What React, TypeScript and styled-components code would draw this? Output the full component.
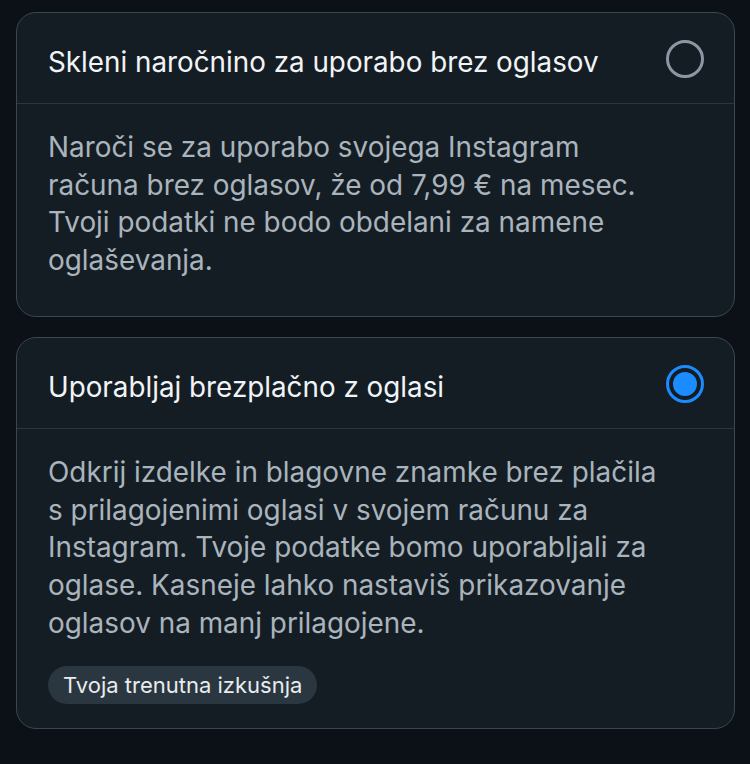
import * as React from 'react';
import styled, { createGlobalStyle } from 'styled-components';

const Global = createGlobalStyle`
  html, body {
    margin: 0;
    padding: 0;
    background: #0b1117;
  }
  body {
    font-family: Inter, "Noto Sans", sans-serif;
    -webkit-font-smoothing: antialiased;
  }
`;

const Page = styled.div`
  width: 750px;
  height: 764px;
  box-sizing: border-box;
  padding: 12px 15px 0 16px;
  display: flex;
  flex-direction: column;
  gap: 20px;
  background: #0b1117;
`;

const Card = styled.div`
  border: 1.5px solid #3b4750;
  border-radius: 20px;
  background: #151d24;
  overflow: hidden;
`;

const Header = styled.div`
  height: 90px;
  display: flex;
  align-items: center;
  justify-content: space-between;
  padding: 0 30px 0 31px;
  border-bottom: 1px solid #2b363e;
`;

const Title = styled.div`
  font-size: 27.8px;
  font-weight: 400;
  color: #f1f4f6;
  padding-top: 8px;
`;

const Radio = styled.div<{ $checked?: boolean }>`
  width: 38px;
  height: 38px;
  margin-top: 2px;
  box-sizing: border-box;
  border-radius: 50%;
  border: 3px solid ${(p) => (p.$checked ? '#1a8cff' : '#8b98a3')};
  display: flex;
  align-items: center;
  justify-content: center;

  &::after {
    content: '';
    display: ${(p) => (p.$checked ? 'block' : 'none')};
    width: 24px;
    height: 24px;
    border-radius: 50%;
    background: #1a8cff;
  }
`;

const Body = styled.div<{ $bottom: number }>`
  padding: 25px 30px ${(p) => p.$bottom}px 31px;
  display: flex;
  flex-direction: column;
  align-items: flex-start;
  gap: 24px;
`;

const Text = styled.p`
  margin: 0;
  font-size: 27.9px;
  line-height: 37.7px;
  color: #a9b4bd;
`;

const Badge = styled.span`
  display: inline-flex;
  align-items: center;
  height: 38px;
  padding: 0 15px;
  border-radius: 19px;
  background: #2a3740;
  color: #e8ecef;
  font-size: 22px;
`;

export default function App() {
  return (
    <>
      <Global />
      <Page>
        <Card>
          <Header>
            <Title>Skleni naročnino za uporabo brez oglasov</Title>
            <Radio />
          </Header>
          <Body $bottom={36}>
            <Text>
              Naroči se za uporabo svojega Instagram
              <br />
              računa brez oglasov, že od 7,99 € na mesec.
              <br />
              Tvoji podatki ne bodo obdelani za namene
              <br />
              oglaševanja.
            </Text>
          </Body>
        </Card>
        <Card>
          <Header>
            <Title>Uporabljaj brezplačno z oglasi</Title>
            <Radio $checked />
          </Header>
          <Body $bottom={24}>
            <Text>
              Odkrij izdelke in blagovne znamke brez plačila
              <br />
              s prilagojenimi oglasi v svojem računu za
              <br />
              Instagram. Tvoje podatke bomo uporabljali za
              <br />
              oglase. Kasneje lahko nastaviš prikazovanje
              <br />
              oglasov na manj prilagojene.
            </Text>
            <Badge>Tvoja trenutna izkušnja</Badge>
          </Body>
        </Card>
      </Page>
    </>
  );
}
